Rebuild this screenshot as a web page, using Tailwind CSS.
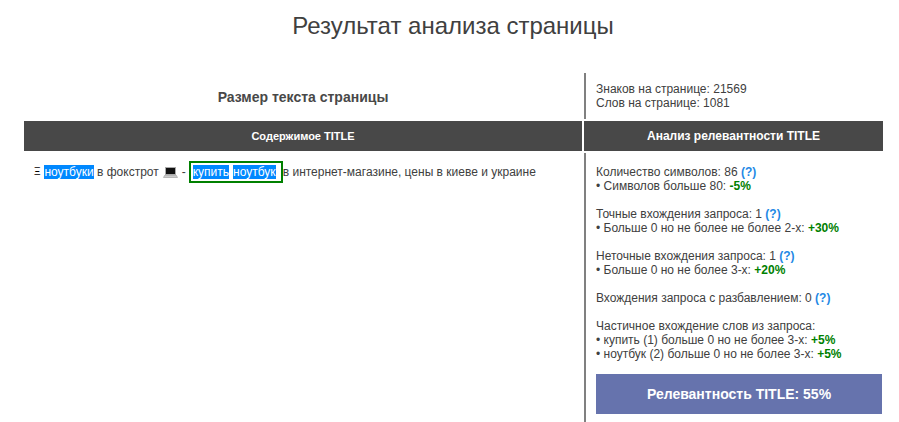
<!DOCTYPE html>
<html lang="ru">
<head>
<meta charset="utf-8">
<script src="https://cdn.jsdelivr.net/npm/@tailwindcss/browser@4"></script>
</head>
<body class="bg-white font-['Liberation_Sans',Arial,sans-serif] text-[12px] leading-[14px] text-[#404040]">
<div class="h-[422px] overflow-hidden px-[24px] pr-[16px]">
  <h1 class="h-[73px] pt-[10px] pr-[1px] text-center text-[24px] leading-[32px] font-normal text-[#404040]">Результат анализа страницы</h1>
  <div class="grid grid-cols-[558px_299px] grid-rows-[46px_30px_269px] gap-[2px]">
    <div class="flex items-center justify-center pt-[1px] text-[14px] font-bold text-[#484848]">Размер текста страницы</div>
    <div class="border-l-2 border-[#808080] pl-[10px] pt-[9px]">
      <p>Знаков на странице: 21569</p>
      <p>Слов на странице: 1081</p>
    </div>
    <div class="flex items-center justify-center bg-[#484848] text-[11px] font-bold text-white">Содержимое TITLE</div>
    <div class="flex items-center justify-center bg-[#484848] text-[12px] font-bold text-white">Анализ релевантности TITLE</div>
    <div class="flex items-start pl-[9px] pt-[8px]">
      <p class="flex items-center h-[22px] whitespace-pre">
        <span class="w-[11px] pl-[1px] text-[10px] text-black">Ξ</span><span class="w-[50px] bg-[#0088ff] text-center text-white">ноутбуки</span><span class="ml-[3px]">в фокстрот</span>
        <svg class="ml-[4px] h-[12px] w-[15px]" viewBox="0 0 15 12"><rect x="2.5" y="1.5" width="10" height="7" fill="#111" stroke="#aaa" stroke-width="1"/><path d="M1.5 9.5h12l1 2H0.5z" fill="#ccc" stroke="#888" stroke-width="0.5"/></svg>
        <span class="ml-[4px]">-</span>
        <span class="ml-[3px] flex h-[22px] w-[94px] items-center border-2 border-[#008000] pl-[2px]"><span class="bg-[#0088ff] text-white">купить</span><span class="w-[4px]"></span><span class="bg-[#0088ff] text-white">ноутбук</span></span>
        <span>в интернет-магазине, цены в киеве и украине</span>
      </p>
    </div>
    <div class="border-l-2 border-[#808080] pl-[10px] pt-[12px]">
      <p>Количество символов: 86 <b class="text-[#1e88e5]">(?)</b></p>
      <p>• Символов больше 80: <b class="text-[#008000]">-5%</b></p>
      <p class="mt-[14px]">Точные вхождения запроса: 1 <b class="text-[#1e88e5]">(?)</b></p>
      <p>• Больше 0 но не более не более 2-х: <b class="text-[#008000]">+30%</b></p>
      <p class="mt-[14px]">Неточные вхождения запроса: 1 <b class="text-[#1e88e5]">(?)</b></p>
      <p>• Больше 0 но не более 3-х: <b class="text-[#008000]">+20%</b></p>
      <p class="mt-[14px]">Вхождения запроса с разбавлением: 0 <b class="text-[#1e88e5]">(?)</b></p>
      <p class="mt-[14px]">Частичное вхождение слов из запроса:</p>
      <p>• купить (1) больше 0 но не более 3-х: <b class="text-[#008000]">+5%</b></p>
      <p>• ноутбук (2) больше 0 но не более 3-х: <b class="text-[#008000]">+5%</b></p>
      <div class="mt-[13px] flex h-[40px] w-[286px] items-center justify-center bg-[#6673ad] text-[14px] font-bold text-white">Релевантность TITLE: 55%</div>
    </div>
  </div>
</div>
</body>
</html>
